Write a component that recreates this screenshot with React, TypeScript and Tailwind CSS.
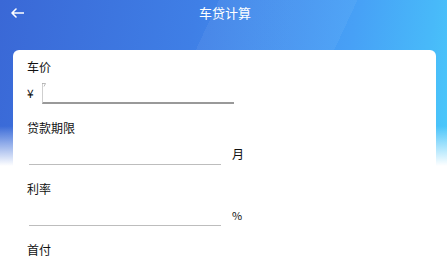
import React from "react";

const font = { fontFamily: '"Noto Sans CJK SC", "Noto Sans", sans-serif' };

export default function App() {
  return (
    <div
      className="relative min-h-[258px] w-full overflow-hidden bg-white bg-[linear-gradient(180deg,rgba(255,255,255,0)_0px,rgba(255,255,255,0)_126px,#ffffff_166px),linear-gradient(115deg,rgba(255,255,255,0)_0%,rgba(255,255,255,0)_38%,rgba(255,255,255,0.05)_38%,rgba(255,255,255,0.05)_62%,rgba(255,255,255,0)_62%),linear-gradient(100deg,#3a68d6_0%,#3f7fe6_40%,#47a0f6_72%,#48b9f9_88%,#4bd2fb_100%)] bg-no-repeat text-[#111]"
      style={font}
    >
      <div className="flex h-[24px] items-center px-[11px] pt-[1px]">
        <svg width="13" height="10" viewBox="0 0 13 10" className="shrink-0">
          <path d="M1 5 H12.5 M5 1 L1 5 L5 9" stroke="#fff" strokeWidth="1.6" fill="none" strokeLinecap="round" strokeLinejoin="round" />
        </svg>
        <div className="flex-1 pr-[10px] text-center text-[13px] leading-[18px] text-white">车贷计算</div>
      </div>

      <div className="ml-[13px] mr-[11px] mt-[26px] rounded-[6px] bg-white px-[14px] pt-[9px] pb-[20px]">
        <div className="text-[12px] leading-[16px]">车价</div>
        <div className="mt-[8px] flex h-[21px] items-end">
          <span className="mb-[3px] w-[15px] text-[12px] leading-[16px]">¥</span>
          <div className="relative h-[21px] w-[192px] border-b-2 border-l border-b-[#999999] border-l-[#cfcfcf]">
            <svg width="4" height="4" viewBox="0 0 4 4" className="absolute left-[-1px] top-0">
              <path d="M0 0.5 H3.5 L2 3.5" stroke="#aaaaaa" strokeWidth="0.8" fill="none" />
            </svg>
          </div>
        </div>

        <div className="mt-[16px] text-[12px] leading-[16px]">贷款期限</div>
        <div className="mt-[7px] flex h-[22px] items-center">
          <div className="ml-[2px] h-[22px] w-[192px] border-b border-[#bdbdbd]" />
          <span className="ml-[11px] text-[12px] leading-[16px]">月</span>
        </div>

        <div className="mt-[16px] text-[12px] leading-[16px]">利率</div>
        <div className="mt-[7px] flex h-[22px] items-center">
          <div className="ml-[2px] h-[22px] w-[192px] border-b border-[#bdbdbd]" />
          <span className="ml-[11px] text-[11px] leading-[16px]">%</span>
        </div>

        <div className="mt-[16px] text-[12px] leading-[16px]">首付</div>
      </div>
    </div>
  );
}
